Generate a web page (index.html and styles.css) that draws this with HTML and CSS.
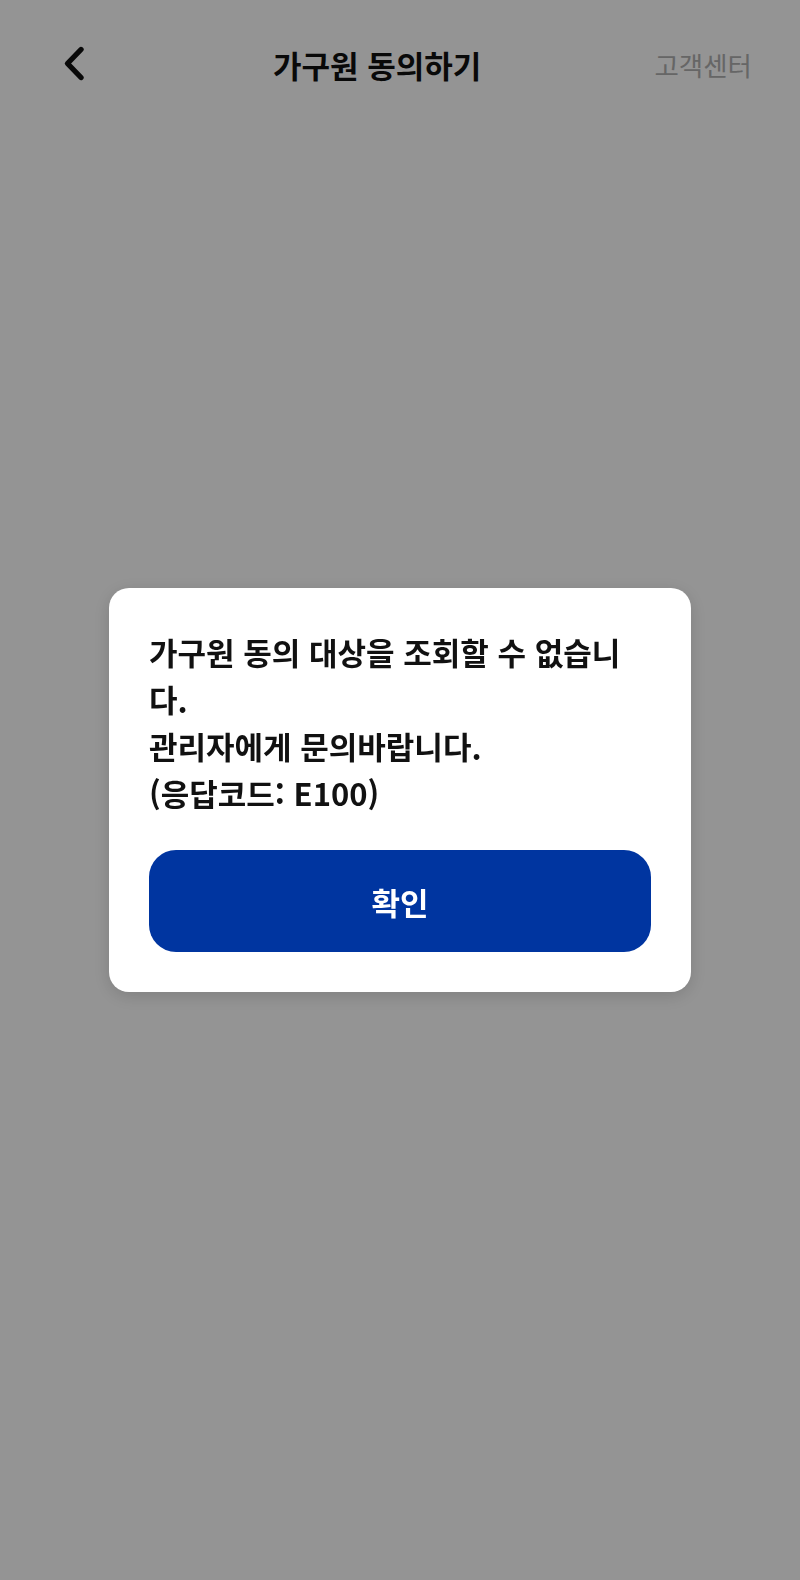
FILE: index.html
```html
<!DOCTYPE html>
<html lang="ko">
<head>
    <meta charset="UTF-8">
    <title>가구원 동의하기</title>
    <link rel="stylesheet" href="styles.css">
</head>
<body>
    <div class="page">
        <header class="top-bar">
            <button class="back-btn" type="button" aria-label="뒤로">
                <svg width="40" height="40" viewBox="0 0 40 40">
                    <polyline points="21,5.5 7.5,19.5 21,33.5" fill="none" stroke="#111" stroke-width="5.4" stroke-linecap="round" stroke-linejoin="round"/>
                </svg>
            </button>
            <h1 class="title">가구원 동의하기</h1>
            <a class="help-link" href="#">고객센터</a>
        </header>
    </div>

    <!-- 알림 팝업 -->
    <div class="dim">
        <div class="alert-box">
            <p class="alert-msg">가구원 동의 대상을 조회할 수 없습니다.<br>관리자에게 문의바랍니다.<br>(응답코드: E100)</p>
            <button class="confirm-btn" type="button">확인</button>
        </div>
    </div>
</body>
</html>
```

FILE: styles.css
```css
body {
    margin: 0;
    font-family: "Noto Sans CJK KR", "Noto Sans", sans-serif;
    background: #fff;
    color: #111;
}

.page {
    min-height: 100vh;
}

.top-bar {
    display: flex;
    align-items: center;
    height: 128px;
    padding: 0 48px 0 60px;
}

.back-btn {
    width: 40px;
    height: 40px;
    padding: 0;
    border: 0;
    background: none;
    display: flex;
}

.title {
    flex: 1;
    margin: 0;
    text-align: center;
    font-size: 31px;
    font-weight: 700;
    color: #111;
}

.help-link {
    font-size: 26.5px;
    color: #b0b0b0;
    text-decoration: none;
}

.dim {
    position: fixed;
    top: 0;
    left: 0;
    right: 0;
    bottom: 0;
    background: rgba(0,0,0,0.42);
    display: flex;
    align-items: center;
    justify-content: center;
}

.alert-box {
    width: 502px;
    padding: 40px;
    background: #fff;
    border-radius: 20px;
    box-shadow: 0 4px 18px rgba(0,0,0,0.15);
}

.alert-msg {
    margin: 0 0 34px;
    font-size: 31px;
    line-height: 47px;
    font-weight: 700;
    color: #111;
}

.confirm-btn {
    display: block;
    width: 100%;
    height: 102px;
    border: 0;
    border-radius: 27px;
    background: #0035a0;
    color: #fff;
    font-family: inherit;
    font-size: 31px;
    font-weight: 700;
}
```
